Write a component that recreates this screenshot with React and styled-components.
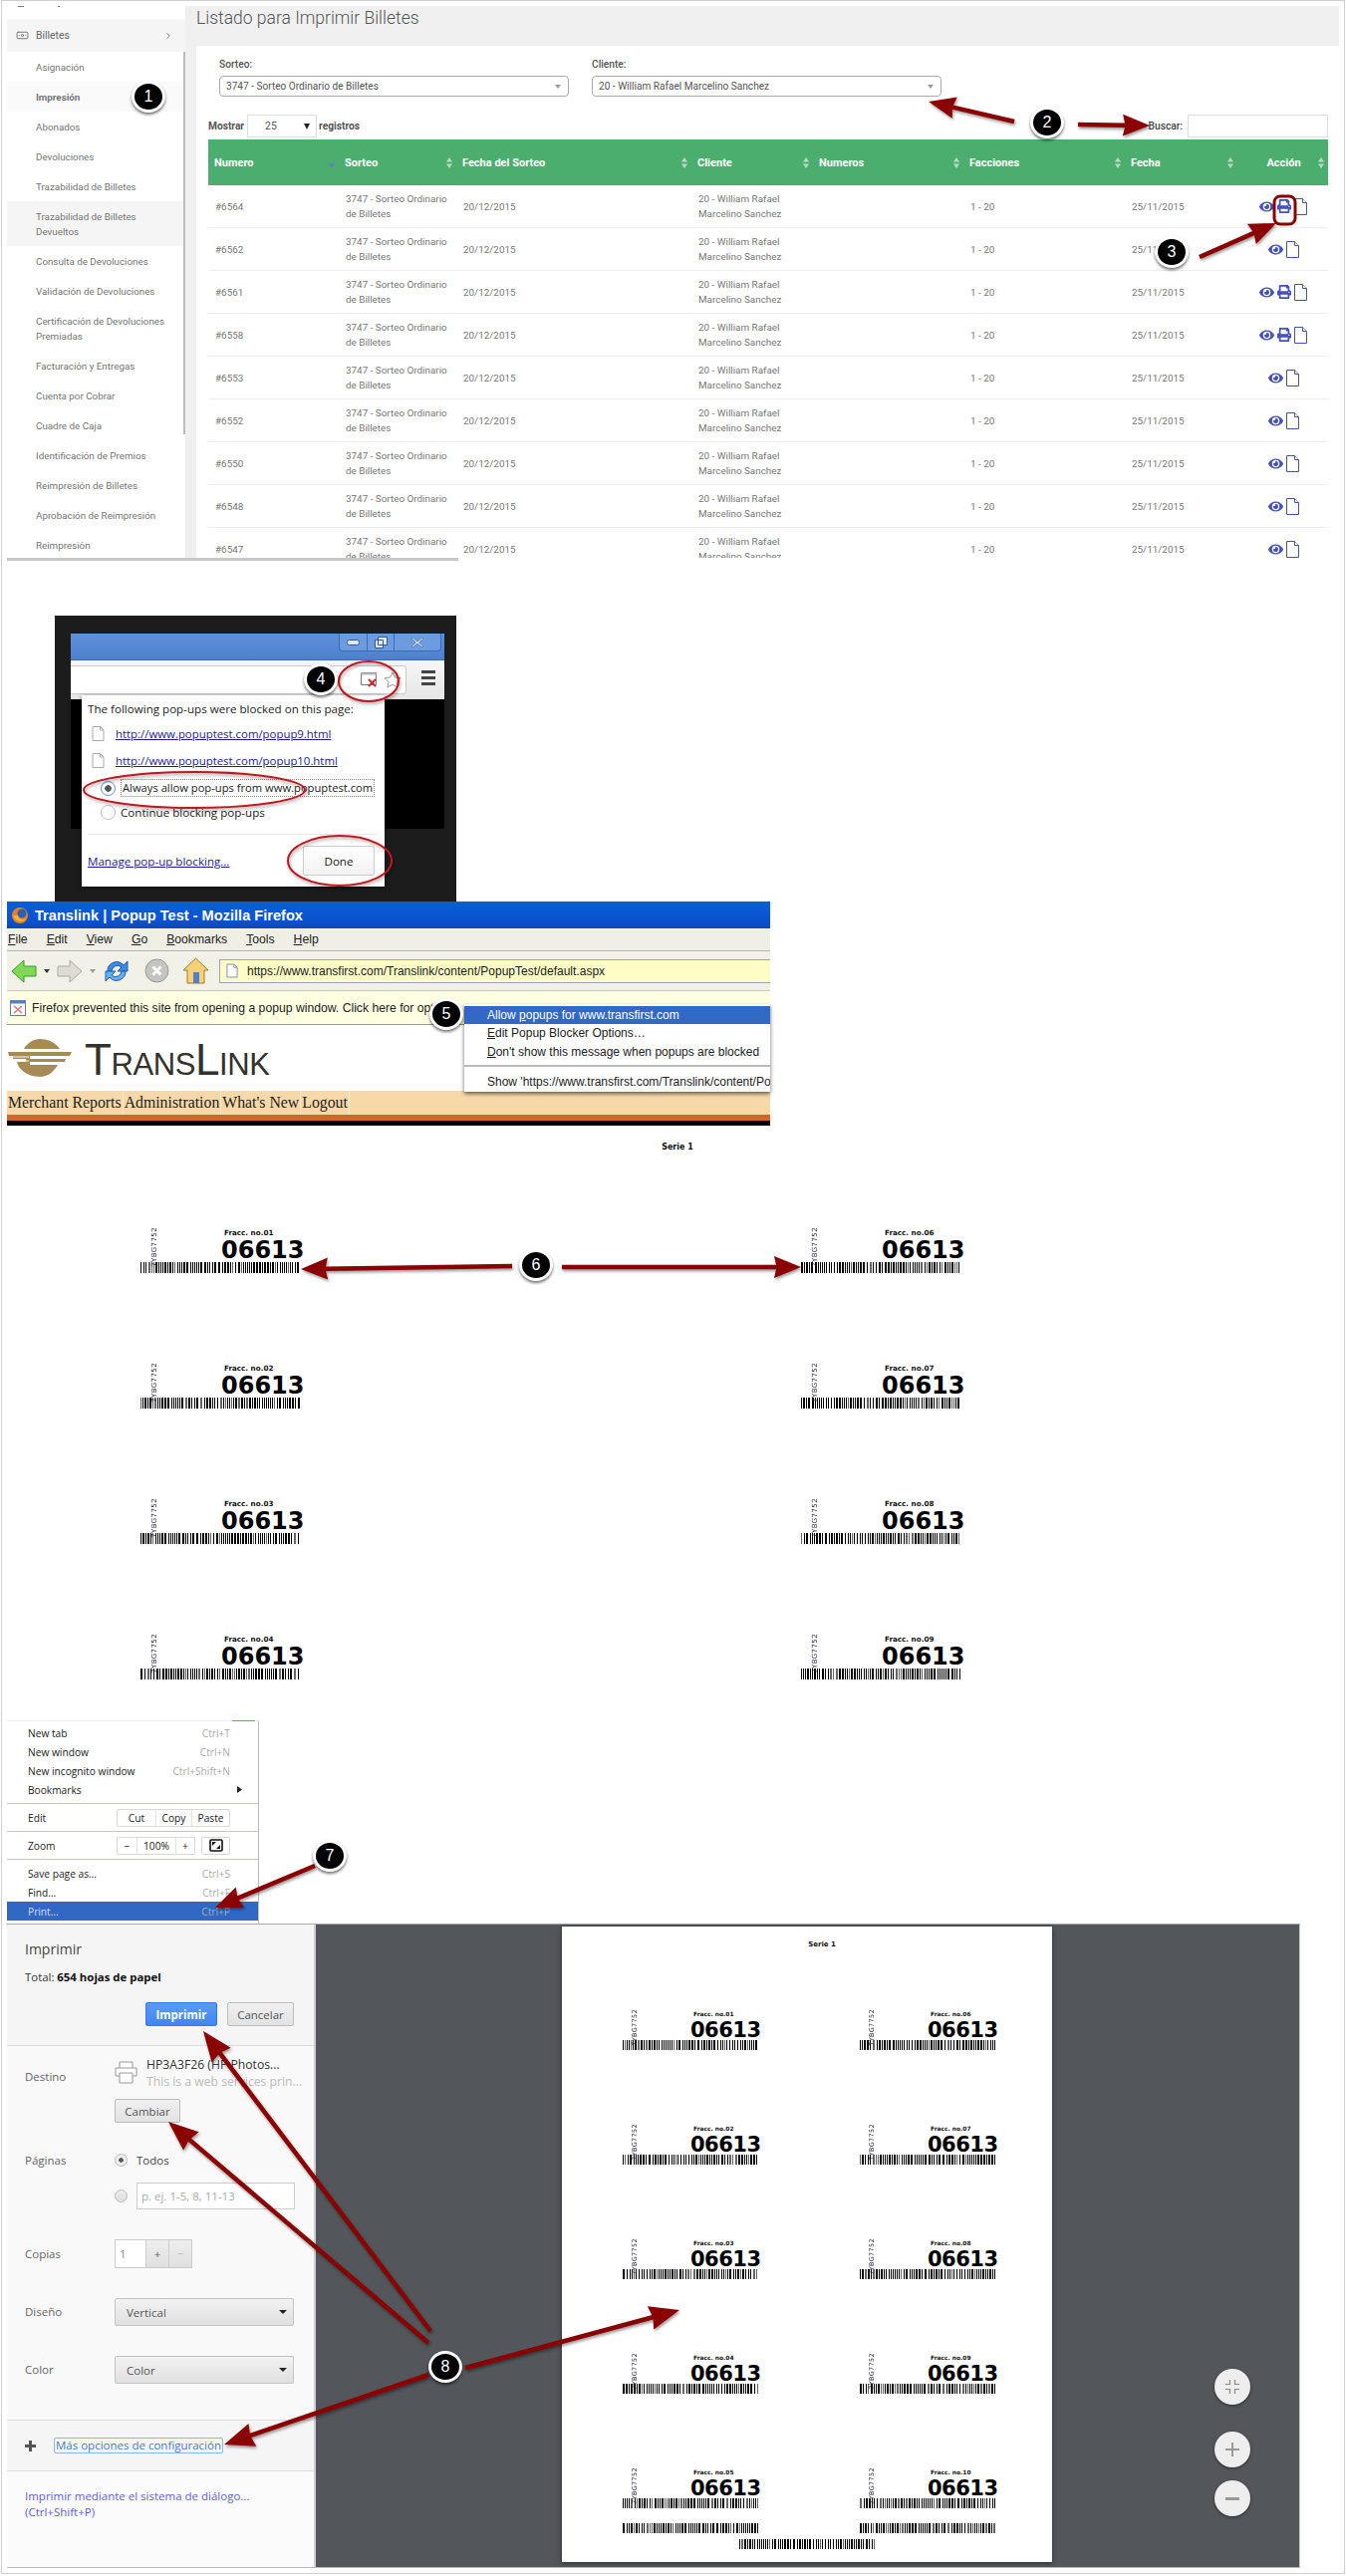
import React from "react";
import styled, { createGlobalStyle } from "styled-components";
import { FaEye, FaPrint } from "react-icons/fa";
import { Banknote, ChevronRight } from "lucide-react";

const Global = createGlobalStyle`
  html, body { margin: 0; padding: 0; background: #fff; }
  * { box-sizing: border-box; }
`;

/* ---------- page frame ---------- */
const Page = styled.div`
  position: relative;
  width: 1351px;
  height: 2586px;
  overflow: hidden;
  background: #fff;
`;
const Frame = styled.div`
  margin-left: 1px;
  width: 1349px;
  height: 2584px;
  padding: 5px 0 0 5px;
  border: 1px solid #cfcfcf;
  display: flex;
  flex-direction: column;
  align-items: flex-start;
`;

/* ---------- section A : ticket listing ---------- */
const Admin = styled.section`
  width: 1337px;
  height: 554px;
  display: flex;
  overflow: hidden;
  font-family: Roboto, "Liberation Sans", sans-serif;
`;
const Sidebar = styled.nav`
  position: relative;
  width: 179px;
  flex: none;
  background: #fff;
  &::after {
    content: "";
    position: absolute;
    top: 46px;
    bottom: 124px;
    right: 0;
    width: 2px;
    background: #bdbdbd;
  }
`;
const SideStub = styled.div`
  height: 13px;
  display: flex;
  gap: 34px;
  padding-left: 11px;
  & > i { display: block; height: 1px; width: 6px; background: #777; }
  & > i + i { width: 2px; }
`;
const SideHead = styled.div`
  height: 33px;
  background: #f5f5f5;
  display: flex;
  align-items: center;
  padding: 0 12px 0 9px;
  gap: 7px;
  font-size: 10.4px;
  color: #666;
  & > span { flex: 1; }
`;
const SideItem = styled.div`
  padding: 7.5px 10px 7.5px 29px;
  line-height: 15px;
  font-size: 9.8px;
  color: #757575;
  width: 177px;
  font-weight: ${p => (p.$bold ? 700 : 400)};
  background: ${p => (p.$bg ? p.$bg : "transparent")};
`;
const Main = styled.div`
  width: 1158px;
  flex: none;
  background: #f0f0f0;
  padding-left: 11px;
`;
const TitleBar = styled.h1`
  margin: 0;
  height: 40px;
  font-size: 17.5px;
  font-weight: 300;
  color: #555;
  line-height: 24px;
`;
const Card = styled.div`
  background: #fff;
  height: 520px;
  padding: 12px 11px 0 12px;
`;
const Filters = styled.div`
  display: grid;
  grid-template-columns: 351px 351px;
  gap: 23px;
  margin-left: 11px;
`;
const FieldLabel = styled.label`
  display: block;
  line-height: 14px;
  font-size: 10.2px;
  font-weight: 500;
  color: #555;
`;
const SelectBox = styled.div`
  margin-top: 4px;
  height: 21px;
  border: 1px solid #aaa;
  border-radius: 4px;
  padding: 0 6px;
  font-size: 10.1px;
  line-height: 19px;
  color: #555;
  display: flex;
  justify-content: space-between;
  align-items: center;
  &::after {
    content: "";
    border: 3px solid transparent;
    border-top: 4px solid #999;
    border-bottom: 0;
    margin-right: 1px;
  }
`;
const Controls = styled.div`
  margin-top: 18px;
  height: 23px;
  display: flex;
  align-items: center;
  font-size: 10.2px;
  font-weight: 700;
  color: #555;
`;
const LengthBox = styled.div`
  width: 70px;
  height: 23px;
  margin: 0 2px 0 3px;
  border: 1px solid #ddd;
  padding: 0 6px 0 17px;
  display: flex;
  align-items: center;
  justify-content: space-between;
  font-weight: 400;
  font-size: 10.4px;
  &::after {
    content: "";
    border: 3.5px solid transparent;
    border-top: 6px solid #222;
    border-bottom: 0;
  }
`;
const SearchLabel = styled.span`
  margin-left: auto;
  margin-right: 5px;
  font-weight: 500;
  color: #444;
`;
const SearchBox = styled.div`
  width: 141px;
  height: 23px;
  border: 1px solid #ddd;
`;
const Table = styled.table`
  margin-top: 2px;
  width: 1124px;
  table-layout: fixed;
  border-collapse: separate;
  border-spacing: 0;
`;
const HeadCell = styled.th`
  height: 46px;
  background: #4cae6e;
  color: #fff;
  font-size: 11px;
  font-weight: 700;
  text-align: ${p => (p.$center ? "center" : "left")};
  padding: 0 4px 0 6px;
  position: relative;
`;
const SortMark = styled.svg`
  position: absolute;
  right: 4px;
  top: 18px;
`;
const Cell = styled.td`
  height: 43px;
  padding: 0 6px 0 7px;
  border-bottom: 1px solid #eee;
  font-size: 9.9px;
  line-height: 15px;
  color: #777;
`;
const ActionWrap = styled.div`
  display: flex;
  align-items: center;
  justify-content: center;
  gap: 3px;
  color: #4352b8;
`;
const BottomScroll = styled.div`
  width: 453px;
  height: 3px;
  flex: none;
  background: #c8c8c8;
`;

/* ---------- section B : chrome pop-up dialog ---------- */
const DarkFrame = styled.section`
  margin: 55px 0 0 48px;
  width: 403px;
  height: 287px;
  flex: none;
  background: #1c1c1c;
  padding: 18px 12px 5px 16px;
`;
const ChromeWin = styled.div`
  position: relative;
  height: 264px;
  font-family: "Open Sans", "Noto Sans", sans-serif;
  font-size: 11.6px;
  color: #222;
`;
const ChromeTitle = styled.div`
  height: 27px;
  background: linear-gradient(#5e90da, #4f80cf);
  display: flex;
  justify-content: flex-end;
  padding-right: 3px;
  border-bottom: 1px solid #3c6cb4;
`;
const WinButtons = styled.div`
  display: flex;
  height: 18px;
  border: 1px solid #3c6cb4;
  border-top: 0;
  border-radius: 0 0 4px 4px;
  background: #6d9be0;
`;
const WinBtn = styled.div`
  width: ${p => p.$w}px;
  border-left: 1px solid #3c6cb4;
  display: flex;
  align-items: center;
  justify-content: center;
  &:first-child { border-left: 0; }
`;
const ChromeBar = styled.div`
  height: 39px;
  background: linear-gradient(#f6f6f6, #e6e6e6);
  padding: 5px 0 0 0;
  display: flex;
  align-items: flex-start;
`;
const Omnibox = styled.div`
  width: 337px;
  height: 29px;
  background: #fff;
  border: 1px solid #ccc;
  border-left: 0;
  border-radius: 0 3px 3px 0;
  display: flex;
  align-items: center;
  justify-content: flex-end;
  gap: 5px;
  padding-right: 4px;
`;
const Burger = styled.div`
  margin: 5px 0 0 15px;
  width: 14px;
  height: 15px;
  background: repeating-linear-gradient(#444 0 3px, transparent 3px 6px);
`;
const BlackPane = styled.div`
  height: 130px;
  background: #000;
`;
const Blocker = styled.div`
  position: absolute;
  left: 11px;
  top: 62px;
  width: 304px;
  height: 192px;
  background: #fff;
  box-shadow: 0 1px 4px rgba(0, 0, 0, 0.55);
  padding: 6px 7px 0 6px;
`;
const BlockerText = styled.div`
  line-height: 16px;
`;
const PopLink = styled.div`
  display: flex;
  align-items: center;
  gap: 11px;
  height: 27px;
  padding-left: 4px;
  margin-top: ${p => p.$mt || 0}px;
  color: #1a1a9a;
  text-decoration: underline;
  font-size: 11.4px;
`;
const RadioLine = styled.div`
  display: flex;
  align-items: center;
  height: 18px;
  padding-left: 13px;
  gap: 5px;
  margin-top: ${p => p.$mt || 0}px;
`;
const RadioDot = styled.span`
  width: 15px;
  height: 15px;
  flex: none;
  border-radius: 50%;
  border: 1px solid ${p => (p.$on ? "#5b8fe0" : "#bbb")};
  background: ${p => (p.$on ? "radial-gradient(circle, #555 0 3px, #fff 3.5px)" : "#fff")};
`;
const Dotted = styled.span`
  border: 1px dotted #888;
  line-height: 16px;
  padding: 0 1px;
  white-space: nowrap;
  font-size: 11.2px;
`;
const BlockerFoot = styled.div`
  margin-top: 13px;
  border-top: 1px solid #e6e6e6;
  padding-top: 11px;
  display: flex;
  align-items: center;
  justify-content: space-between;
  padding-right: 3px;
`;
const ManageLink = styled.span`
  color: #1a1a9a;
  text-decoration: underline;
`;
const DoneBtn = styled.div`
  width: 72px;
  height: 30px;
  border: 1px solid #ccc;
  border-radius: 2px;
  background: linear-gradient(#fff, #f2f2f2);
  display: flex;
  align-items: center;
  justify-content: center;
`;

/* ---------- section C : firefox ---------- */
const Firefox = styled.section`
  position: relative;
  width: 766px;
  height: 225px;
  flex: none;
  font-family: "Liberation Sans", Arial, sans-serif;
  background: #000;
`;
const FoxTitle = styled.div`
  height: 27px;
  background: linear-gradient(#0a5ed8, #0a52d0 70%, #0b49b8);
  color: #fff;
  font-size: 14.6px;
  font-weight: 700;
  display: flex;
  align-items: center;
  gap: 5px;
  padding-left: 3px;
`;
const FoxMenu = styled.div`
  height: 23px;
  background: #f0efe6;
  border-bottom: 1px solid #b8b7ac;
  display: flex;
  align-items: center;
  gap: 19px;
  padding-left: 1px;
  font-size: 12.2px;
  color: #222;
`;
const FoxTools = styled.div`
  height: 40px;
  background: #f2f1e8;
  border-bottom: 1px solid #c9c8bc;
  display: flex;
  align-items: center;
  padding-left: 4px;
  gap: 7px;
`;
const UrlBar = styled.div`
  margin-left: 3px;
  flex: 1;
  height: 24px;
  background: #fdfdc6;
  border: 1px solid #9da4b5;
  border-right: 0;
  display: flex;
  align-items: center;
  gap: 9px;
  padding-left: 6px;
  font-size: 12px;
  color: #222;
`;
const InfoBar = styled.div`
  height: 34px;
  background: #ffffe1;
  border-bottom: 1px solid #999;
  display: flex;
  align-items: center;
  gap: 6px;
  padding-left: 3px;
  font-size: 12.2px;
  color: #222;
  white-space: nowrap;
`;
const LogoBand = styled.div`
  height: 66px;
  background: #fff;
  display: flex;
  align-items: center;
  gap: 13px;
  padding-left: 1px;
`;
const LogoText = styled.div`
  font-size: 44px;
  font-variant: small-caps;
  letter-spacing: -0.4px;
  line-height: 1;
  color: #33322c;
  margin-top: 4px;
`;
const FoxNav = styled.div`
  height: 24px;
  background: #f7d9a9;
  display: flex;
  align-items: center;
  font-family: "Liberation Serif", serif;
  font-size: 15.8px;
  color: #222;
  & > span { padding: 0 1px; border-right: 1px solid #fbe9cc; line-height: 24px; white-space: nowrap; }
`;
const OrangeRule = styled.div`
  height: 6px;
  background: #d0682a;
`;
const FoxPopup = styled.div`
  position: absolute;
  left: 459px;
  top: 103px;
  width: 307px;
  height: 88px;
  background: #fff;
  padding: 2px 0 0 0;
  box-shadow: 0 2px 4px rgba(0, 0, 0, 0.6);
  font-size: 12px;
  color: #222;
  white-space: nowrap;
  overflow: hidden;
`;
const FoxItem = styled.div`
  height: ${p => p.$h || 18}px;
  line-height: ${p => p.$h || 18}px;
  padding-left: 23px;
  background: ${p => (p.$active ? "#3169c4" : "transparent")};
  color: ${p => (p.$active ? "#fff" : "#222")};
`;
const FoxDivider = styled.div`
  margin: 4px 0 5px;
  border-top: 2px solid #bbb;
`;

/* ---------- tickets ---------- */
const Sheet = styled.section`
  width: 1337px;
  height: 597px;
  flex: none;
  overflow: hidden;
`;
const SerieTitle = styled.div`
  font-family: "DejaVu Sans", sans-serif;
  font-weight: 700;
  font-size: ${p => p.$size}px;
  color: #111;
  text-align: center;
  padding-left: ${p => p.$pad || 0}px;
  line-height: 12px;
  padding-top: ${p => p.$top}px;
`;
const TicketGrid = styled.div`
  display: grid;
  grid-template-columns: ${p => p.$col}px 1fr;
  grid-auto-rows: ${p => p.$row}px;
  padding-left: ${p => p.$left}px;
  margin-top: ${p => p.$mt}px;
`;
const Ticket = styled.div`
  display: flex;
  flex-direction: column;
  align-items: flex-start;
`;
const TicketHead = styled.div`
  height: ${p => p.$h}px;
  display: flex;
  align-items: flex-start;
  font-family: "DejaVu Sans", sans-serif;
  font-weight: 700;
  color: #000;
`;
const SideCode = styled.div`
  writing-mode: vertical-rl;
  transform: rotate(180deg);
  font-size: ${p => p.$size}px;
  font-weight: 400;
  line-height: 6px;
  width: 6px;
  margin-left: ${p => p.$ml}px;
  color: #224;
  white-space: nowrap;
  letter-spacing: 0.4px;
`;
const TicketInfo = styled.div`
  margin-left: ${p => p.$ml}px;
  display: flex;
  flex-direction: column;
`;
const Fracc = styled.div`
  margin-left: ${p => p.$ml}px;
  font-size: ${p => p.$size}px;
  line-height: ${p => p.$lh}px;
  color: #111;
  white-space: nowrap;
`;
const Serial = styled.div`
  font-size: ${p => p.$size}px;
  line-height: ${p => p.$lh}px;
  letter-spacing: ${p => p.$ls}px;
`;

/* ---------- chrome menu ---------- */
const Menu = styled.section`
  width: 253px;
  height: 204px;
  flex: none;
  position: relative;
  border-top: 1px solid #eee;
  border-right: 1px solid #bbb;
  padding-top: 2px;
  font-family: "Open Sans", "Noto Sans", sans-serif;
  font-size: 10.2px;
  color: #222;
  background: #fff;
  &::before {
    content: "";
    position: absolute;
    left: 226px;
    top: -1px;
    width: 23px;
    height: 1px;
    background: #d66;
  }
`;
const MenuRow = styled.div`
  height: 19px;
  display: flex;
  align-items: center;
  justify-content: space-between;
  padding: 0 28px 0 21px;
  background: ${p => (p.$active ? "#3068c4" : "transparent")};
  color: ${p => (p.$active ? "#d8dee8" : "inherit")};
`;
const Shortcut = styled.span`
  color: #aaa;
`;
const MenuTool = styled.div`
  height: 28px;
  border-top: 1px solid #c8c8c0;
  display: flex;
  align-items: center;
  justify-content: space-between;
  padding: 0 28px 0 21px;
  margin-top: ${p => p.$mt || 0}px;
`;
const ToolGroup = styled.div`
  display: flex;
  gap: 6px;
`;
const Segments = styled.div`
  display: flex;
  height: 18px;
  border: 1px solid #d8d8d8;
  border-radius: 2px;
`;
const Segment = styled.div`
  width: ${p => p.$w}px;
  display: flex;
  align-items: center;
  justify-content: center;
  border-left: 1px solid #e2e2e2;
  &:first-child { border-left: 0; }
`;
const MenuFoot = styled.div`
  border-top: 1px solid #c8c8c0;
  padding-top: 4px;
`;

/* ---------- print dialog ---------- */
const PrintDialog = styled.section`
  width: 1298px;
  height: 647px;
  flex: none;
  display: flex;
  border-top: 1px solid #aaa;
  border-bottom: 1px solid #bbb;
  font-family: "Open Sans", "Noto Sans", sans-serif;
  font-size: 11.5px;
  color: #555;
`;
const Panel = styled.aside`
  width: 310px;
  flex: none;
  display: flex;
  flex-direction: column;
  background: #fbfbfb;
  border-right: 2px solid #d0d0d0;
`;
const PanelHead = styled.div`
  height: 122px;
  flex: none;
  background: #f5f5f5;
  border-bottom: 1px solid #dcdcdc;
  padding: 16px 20px 0 18px;
`;
const PanelTitle = styled.div`
  font-size: 14px;
  line-height: 18px;
  color: #444;
`;
const PanelTotal = styled.div`
  margin-top: 11px;
  line-height: 16px;
  font-size: 11.4px;
  color: #333;
  & > b { color: #111; }
`;
const PanelActions = styled.div`
  margin-top: 17px;
  display: flex;
  justify-content: flex-end;
  gap: 10px;
`;
const PrintBtn = styled.div`
  width: ${p => p.$w}px;
  height: ${p => p.$h || 24}px;
  border: 1px solid ${p => (p.$primary ? "#3079ed" : "#bbb")};
  border-radius: 2px;
  display: flex;
  align-items: center;
  justify-content: center;
  font-weight: ${p => (p.$primary ? 700 : 400)};
  color: ${p => (p.$primary ? "#fff" : "#555")};
  background: ${p => (p.$primary ? "linear-gradient(#5b9bf5, #4285f4)" : "linear-gradient(#f0f0f0, #e2e2e2)")};
  margin-top: ${p => p.$mt || 0}px;
`;
const Settings = styled.div`
  height: 375px;
  flex: none;
  padding: 10px 20px 0 18px;
  background: #f9f9f9;
`;
const SettingRow = styled.div`
  display: grid;
  grid-template-columns: 90px 1fr;
  margin-top: ${p => p.$mt || 0}px;
`;
const SetLabel = styled.div`
  line-height: 16px;
  padding-top: ${p => p.$pt || 0}px;
  color: #666;
`;
const DestWrap = styled.div`
  display: flex;
  gap: 9px;
`;
const DestName = styled.div`
  line-height: 17px;
  white-space: nowrap;
  color: #333;
  font-size: 12.2px;
  & > small { display: block; font-size: 12.2px; color: #bbb; }
`;
const RadioRow = styled.div`
  display: flex;
  align-items: center;
  gap: 9px;
  margin-top: ${p => p.$mt || 0}px;
  color: #444;
`;
const PrintRadio = styled.span`
  width: 13px;
  height: 13px;
  flex: none;
  border-radius: 50%;
  border: 1px solid #bbb;
  background: ${p => (p.$on ? "radial-gradient(circle, #555 0 2px, #eee 2.5px)" : "linear-gradient(#eee, #ddd)")};
`;
const TextField = styled.div`
  width: ${p => p.$w}px;
  height: 27px;
  background: #fff;
  border: 1px solid #ccc;
  padding-left: 4px;
  display: flex;
  align-items: center;
  color: #aaa;
`;
const Stepper = styled.div`
  display: flex;
  height: 29px;
`;
const StepInput = styled.div`
  width: 32px;
  background: #fff;
  border: 1px solid #ccc;
  padding-left: 4px;
  display: flex;
  align-items: center;
  color: #888;
`;
const StepBtn = styled.div`
  width: 23px;
  border: 1px solid #ccc;
  border-left: 0;
  background: linear-gradient(#eee, #e0e0e0);
  display: flex;
  align-items: center;
  justify-content: center;
  color: ${p => (p.$off ? "#bbb" : "#555")};
`;
const Dropdown = styled.div`
  height: 28px;
  width: 180px;
  border: 1px solid #c4c4c4;
  border-radius: 2px;
  background: linear-gradient(#f2f2f2, #e0e0e0);
  padding: 0 6px 0 11px;
  display: flex;
  align-items: center;
  justify-content: space-between;
  color: #555;
  &::after {
    content: "";
    border: 4px solid transparent;
    border-top: 4px solid #222;
    border-bottom: 0;
  }
`;
const MoreRow = styled.div`
  height: 52px;
  flex: none;
  display: flex;
  align-items: center;
  background: #f5f5f5;
  border-top: 1px solid #e0e0e0;
  border-bottom: 1px solid #e0e0e0;
  padding-left: 18px;
`;
const PlusMark = styled.span`
  width: 11px;
  height: 11px;
  margin-right: 18px;
  background:
    linear-gradient(#555, #555) center / 100% 3px no-repeat,
    linear-gradient(#555, #555) center / 3px 100% no-repeat;
`;
const MoreLink = styled.span`
  color: #4a7bd0;
  border: 1px solid #8fb4ee;
  border-radius: 2px;
  line-height: 14px;
  padding: 0 1px;
  white-space: nowrap;
`;
const SysLink = styled.div`
  padding: 17px 0 0 18px;
  color: #5f62d6;
  line-height: 16px;
`;
const Viewer = styled.div`
  flex: 1;
  position: relative;
  background: #53565a;
  border-right: 1px solid #ccc;
  padding: 2px 0 0 247px;
`;
const PreviewPage = styled.div`
  width: 492px;
  height: 638px;
  background: #fff;
  box-shadow: 0 1px 4px rgba(0, 0, 0, 0.5);
`;
const ExtraBars = styled.div`
  display: grid;
  grid-template-columns: 238px 1fr;
  padding-left: 61px;
  margin-top: -59px;
`;
const CenterBar = styled.div`
  margin: 6px 0 0 178px;
`;
const ZoomBtn = styled.div`
  position: absolute;
  right: ${p => p.$right}px;
  top: ${p => p.$top}px;
  width: 36px;
  height: 36px;
  border-radius: 50%;
  background: #eee;
  box-shadow: 0 1px 3px rgba(0, 0, 0, 0.5);
  display: flex;
  align-items: center;
  justify-content: center;
`;

/* ---------- annotation overlay ---------- */
const Overlay = styled.svg`
  position: absolute;
  left: 0;
  top: 0;
  pointer-events: none;
`;
const Badge = styled.div`
  position: absolute;
  left: ${p => p.$x - 17}px;
  top: ${p => p.$y - 16}px;
  width: 34px;
  height: 32px;
  border-radius: 50%;
  background: #000;
  border: 3px solid #fff;
  box-shadow: 0 2px 3px rgba(0, 0, 0, 0.55);
  color: #fff;
  font-family: "Liberation Sans", Arial, sans-serif;
  font-size: 16px;
  display: flex;
  align-items: center;
  justify-content: center;
`;

/* ---------- drawings ---------- */
function Arrow({ from, to, len = 25, half = 11, shaft = 4.5 }) {
  const dx = to[0] - from[0];
  const dy = to[1] - from[1];
  const d = Math.hypot(dx, dy);
  const ux = dx / d;
  const uy = dy / d;
  const nx = -uy;
  const ny = ux;
  const bx = to[0] - ux * len;
  const by = to[1] - uy * len;
  const pts = [
    [from[0] + (nx * shaft) / 2, from[1] + (ny * shaft) / 2],
    [bx + (nx * shaft) / 2, by + (ny * shaft) / 2],
    [bx + nx * half - ux * 2, by + ny * half - uy * 2],
    to,
    [bx - nx * half - ux * 2, by - ny * half - uy * 2],
    [bx - (nx * shaft) / 2, by - (ny * shaft) / 2],
    [from[0] - (nx * shaft) / 2, from[1] - (ny * shaft) / 2],
  ];
  return <polygon points={pts.map(p => p.join(",")).join(" ")} fill="#8b0000" style={{ filter: "drop-shadow(1px 2px 1.5px rgba(0,0,0,.4))" }} />;
}

function Barcode({ width, height, seed = 7 }) {
  const bars = [];
  let x = 0;
  let s = seed;
  const next = () => {
    s = (s * 137 + 11) % 251;
    return s;
  };
  while (x < width) {
    const r = next();
    const w = r % 3 === 0 ? 2 : 1;
    bars.push(<rect key={x} x={x} y={0} width={w} height={height} fill={r % 7 === 0 ? "#666" : "#000"} />);
    x += w + (r % 5 === 0 ? 2 : 1);
  }
  return (
    <svg width={width} height={height} shapeRendering="crispEdges" style={{ display: "block" }}>
      {bars}
    </svg>
  );
}

function SortIcon({ active }) {
  return (
    <SortMark width="6" height="11" viewBox="0 0 6 11">
      <path d="M3 0 6 4.5H0Z" fill={active ? "transparent" : "#b9d9c4"} />
      <path d="M3 11 0 6.5H6Z" fill={active ? "#6a78c8" : "#b9d9c4"} />
    </SortMark>
  );
}

function DocIcon() {
  return (
    <svg width="13" height="17" viewBox="0 0 13 17" fill="#fff" stroke="currentColor" strokeWidth="1">
      <path d="M.5.5H8.5L12.5 4.5V16.5H.5Z" />
      <path d="M8.5.5V4.5H12.5" />
    </svg>
  );
}

const sizes = {
  big: { head: 35, code: 7, codeMl: 11, infoMl: 64, fracc: 7.2, fraccMl: 3, fraccLh: 12, num: 24, numLh: 22, ls: 0, bar: 160, barH: 11 },
  small: { head: 31, code: 6.4, codeMl: 9, infoMl: 53, fracc: 5.9, fraccMl: 3, fraccLh: 11, num: 21, numLh: 20, ls: -0.5, bar: 136, barH: 10 },
};

function TicketBlock({ no, kind, seed }) {
  const c = sizes[kind];
  return (
    <Ticket>
      <TicketHead $h={c.head}>
        <SideCode $size={c.code} $ml={c.codeMl}>7YBG7752</SideCode>
        <TicketInfo $ml={c.infoMl}>
          <Fracc $size={c.fracc} $lh={c.fraccLh} $ml={c.fraccMl}>Fracc. no.{no}</Fracc>
          <Serial $size={c.num} $lh={c.numLh} $ls={c.ls}>06613</Serial>
        </TicketInfo>
      </TicketHead>
      <Barcode width={c.bar} height={c.barH} seed={seed} />
    </Ticket>
  );
}

const ticketOrder = [["01", "06"], ["02", "07"], ["03", "08"], ["04", "09"], ["05", "10"]];

function PageIcon({ w = 13, h = 15, stroke = "#aaa" }) {
  return (
    <svg width={w} height={h} viewBox="0 0 13 15">
      <path d="M1 .5H8.5L12 4V14.5H1Z M8.5 .5V4H12" fill="#fff" stroke={stroke} />
    </svg>
  );
}

const menu = ["Asignación", "Impresión", "Abonados", "Devoluciones", "Trazabilidad de Billetes", "Trazabilidad de Billetes Devueltos", "Consulta de Devoluciones", "Validación de Devoluciones", "Certificación de Devoluciones Premiadas", "Facturación y Entregas", "Cuenta por Cobrar", "Cuadre de Caja", "Identificación de Premios", "Reimpresión de Billetes", "Aprobación de Reimpresión", "Reimpresión"];
const columns = [["Numero", 131], ["Sorteo", 118], ["Fecha del Sorteo", 236], ["Cliente", 122], ["Numeros", 151], ["Facciones", 162], ["Fecha", 113], ["Acción", 91]];
const rows = [["6564", 1], ["6562", 0], ["6561", 1], ["6558", 1], ["6553", 0], ["6552", 0], ["6550", 0], ["6548", 0], ["6547", 0]];

const badges = [[1, 149, 97], [2, 1051, 123], [3, 1176, 253], [4, 322, 682], [5, 448, 1018], [6, 538, 1270], [7, 331, 1863], [8, 447, 2376]];

export default function App() {
  return (
    <Page>
      <Global />
      <Frame>
        <Admin>
          <Sidebar>
            <SideStub><i /><i /></SideStub>
            <SideHead>
              <Banknote size={13} strokeWidth={1.6} />
              <span>Billetes</span>
              <ChevronRight size={10} />
            </SideHead>
            {menu.map((m, i) => (
              <SideItem key={m + i} $bold={i === 1} $bg={i === 1 ? "#fafafa" : i === 5 ? "#f5f5f6" : undefined}>{m}</SideItem>
            ))}
          </Sidebar>
          <Main>
            <TitleBar>Listado para Imprimir Billetes</TitleBar>
            <Card>
              <Filters>
                <div>
                  <FieldLabel>Sorteo:</FieldLabel>
                  <SelectBox>3747 - Sorteo Ordinario de Billetes</SelectBox>
                </div>
                <div>
                  <FieldLabel>Cliente:</FieldLabel>
                  <SelectBox>20 - William Rafael Marcelino Sanchez</SelectBox>
                </div>
              </Filters>
              <Controls>
                Mostrar
                <LengthBox>25</LengthBox>
                registros
                <SearchLabel>Buscar:</SearchLabel>
                <SearchBox />
              </Controls>
              <Table>
                <colgroup>
                  {columns.map(([n, w]) => <col key={n} width={w} />)}
                </colgroup>
                <thead>
                  <tr>
                    {columns.map(([n], i) => (
                      <HeadCell key={n} $center={i === 7}>
                        {n}
                        <SortIcon active={i === 0} />
                      </HeadCell>
                    ))}
                  </tr>
                </thead>
                <tbody>
                  {rows.map(([id, printable]) => (
                    <tr key={id}>
                      <Cell>#{id}</Cell>
                      <Cell>3747 - Sorteo Ordinario de Billetes</Cell>
                      <Cell>20/12/2015</Cell>
                      <Cell>20 - William Rafael Marcelino Sanchez</Cell>
                      <Cell />
                      <Cell>1 - 20</Cell>
                      <Cell>25/11/2015</Cell>
                      <Cell>
                        <ActionWrap>
                          <FaEye size={15} />
                          {printable ? <FaPrint size={14} /> : null}
                          <DocIcon />
                        </ActionWrap>
                      </Cell>
                    </tr>
                  ))}
                </tbody>
              </Table>
            </Card>
          </Main>
        </Admin>
        <BottomScroll />

        <DarkFrame>
          <ChromeWin>
            <ChromeTitle>
              <WinButtons>
                <WinBtn $w={27}>
                  <svg width="13" height="6"><rect x=".5" y=".5" width="12" height="5" rx="2" fill="#dfe8f6" stroke="#33588f" /></svg>
                </WinBtn>
                <WinBtn $w={27}>
                  <svg width="14" height="14"><path d="M4.5 1.5h9v8h-9z M1.5 4.5h8v8h-8z" fill="#dfe8f6" stroke="#33588f" /></svg>
                </WinBtn>
                <WinBtn $w={47}>
                  <svg width="12" height="10"><path d="M1 0 6 4 11 0 12 1 7.5 5 12 9 11 10 6 6 1 10 0 9 4.5 5 0 1Z" fill="#e7eef9" stroke="#33588f" strokeWidth=".6" /></svg>
                </WinBtn>
              </WinButtons>
            </ChromeTitle>
            <ChromeBar>
              <Omnibox>
                <svg width="18" height="17" viewBox="0 0 18 17">
                  <path d="M.5 1.5h15v12H.5z" fill="#fff" stroke="#777" />
                  <path d="M.5 1.5h15v2H.5z" fill="#bbb" />
                  <path d="M8 8 15 15M15 8 8 15" stroke="#d22" strokeWidth="2" />
                </svg>
                <svg width="18" height="17" viewBox="0 0 18 17">
                  <path d="M9 1 11.4 6 17 6.7 13 10.5 14 16 9 13.3 4 16 5 10.5 1 6.7 6.6 6Z" fill="#fff" stroke="#999" />
                </svg>
              </Omnibox>
              <Burger />
            </ChromeBar>
            <BlackPane />
            <Blocker>
              <BlockerText>The following pop-ups were blocked on this page:</BlockerText>
              <PopLink $mt={3}><PageIcon />http://www.popuptest.com/popup9.html</PopLink>
              <PopLink><PageIcon />http://www.popuptest.com/popup10.html</PopLink>
              <RadioLine $mt={5}><RadioDot $on /><Dotted>Always allow pop-ups from www.popuptest.com</Dotted></RadioLine>
              <RadioLine $mt={6}><RadioDot /><span>Continue blocking pop-ups</span></RadioLine>
              <BlockerFoot>
                <ManageLink>Manage pop-up blocking…</ManageLink>
                <DoneBtn>Done</DoneBtn>
              </BlockerFoot>
            </Blocker>
          </ChromeWin>
        </DarkFrame>

        <Firefox>
          <FoxTitle>
            <svg width="20" height="18" viewBox="0 0 20 18">
              <circle cx="10" cy="9" r="8" fill="#e8811c" />
              <circle cx="12" cy="7" r="4.5" fill="#2d5fb4" />
              <path d="M3 9c2 6 9 8 14 3-4 2-8 1-9-3Z" fill="#f6b23a" />
            </svg>
            Translink | Popup Test - Mozilla Firefox
          </FoxTitle>
          <FoxMenu>
            {["File", "Edit", "View", "Go", "Bookmarks", "Tools", "Help"].map(m => (
              <span key={m}><u>{m[0]}</u>{m.slice(1)}</span>
            ))}
          </FoxMenu>
          <FoxTools>
            <svg width="26" height="24" viewBox="0 0 26 24"><path d="M1 12 13 1V7H25V17H13V23Z" fill="#7ed957" stroke="#3a9a2c" /></svg>
            <svg width="6" height="4" viewBox="0 0 6 4"><path d="M0 0H6L3 4Z" fill="#333" /></svg>
            <svg width="26" height="24" viewBox="0 0 26 24"><path d="M25 12 13 1V7H1V17H13V23Z" fill="#dedcd2" stroke="#aaa" /></svg>
            <svg width="6" height="4" viewBox="0 0 6 4"><path d="M0 0H6L3 4Z" fill="#999" /></svg>
            <svg width="28" height="26" viewBox="0 0 28 26">
              <path d="M5 13A9 9 0 0 1 21 7L25 3V13H15L19 9A6 6 0 0 0 9 13Z" fill="#3c8be0" stroke="#1c5fb0" />
              <path d="M23 13A9 9 0 0 1 7 19L3 23V13H13L9 17A6 6 0 0 0 19 13Z" fill="#62aef2" stroke="#1c5fb0" />
            </svg>
            <svg width="25" height="25" viewBox="0 0 25 25" style={{ marginLeft: 7 }}>
              <circle cx="12.5" cy="12.5" r="11.5" fill="#c4c4c0" stroke="#999" />
              <path d="M8.5 8.5 16.5 16.5M16.5 8.5 8.5 16.5" stroke="#fff" strokeWidth="3" />
            </svg>
            <svg width="27" height="27" viewBox="0 0 27 27" style={{ marginLeft: 6 }}>
              <path d="M13.5 1 26 13H22V26H5V13H1Z" fill="#f3d27a" stroke="#a8792a" />
              <rect x="11" y="15" width="6" height="11" fill="#5a7fc0" />
            </svg>
            <UrlBar>
              <PageIcon w={12} h={15} stroke="#7a8db0" />
              https://www.transfirst.com/Translink/content/PopupTest/default.aspx
            </UrlBar>
          </FoxTools>
          <InfoBar>
            <svg width="16" height="16" viewBox="0 0 16 16">
              <rect x=".5" y=".5" width="15" height="15" fill="#fff" stroke="#5a7fc0" />
              <rect x=".5" y=".5" width="15" height="3" fill="#5a7fc0" />
              <path d="M4 6 12 13M12 6 4 13" stroke="#d77" strokeWidth="1.5" />
            </svg>
            Firefox prevented this site from opening a popup window. Click here for options...
          </InfoBar>
          <LogoBand>
            <svg width="64" height="40" viewBox="0 0 64 40">
              <path d="M16 11C19 5 26 1 32 1 41 1 48 5 52 11Z" fill="#a88a55" />
              <path d="M0 14H64L62 18H22V21H58L57 24H22V27H50C46 34 40 39 32 39 18 39 10 30 9 24H18V21H5V18H1Z" fill="#a88a55" />
              <path d="M0 12H64M4 19H21M8 23H21M22 20H60" stroke="#fff" strokeWidth="1" />
            </svg>
            <LogoText>TransLink</LogoText>
          </LogoBand>
          <FoxNav>
            <span>Merchant Reports</span>
            <span>Administration</span>
            <span>What's New</span>
            <span>Logout</span>
          </FoxNav>
          <OrangeRule />
          <FoxPopup>
            <FoxItem $active>Allow <u>p</u>opups for www.transfirst.com</FoxItem>
            <FoxItem $h={19}><u>E</u>dit Popup Blocker Options…</FoxItem>
            <FoxItem $h={18}><u>D</u>on't show this message when popups are blocked</FoxItem>
            <FoxDivider />
            <FoxItem $h={20}>Show 'https://www.transfirst.com/Translink/content/PopupTest</FoxItem>
          </FoxPopup>
        </Firefox>

        <Sheet>
          <SerieTitle $size={8} $pad={9} $top={16}>Serie 1</SerieTitle>
          <TicketGrid $col={663} $row={136} $left={134} $mt={74}>
            {ticketOrder.slice(0, 4).flat().map(no => (
              <TicketBlock key={no} no={no} kind="big" seed={+no + 5} />
            ))}
          </TicketGrid>
        </Sheet>

        <Menu>
          <MenuRow>New tab<Shortcut>Ctrl+T</Shortcut></MenuRow>
          <MenuRow>New window<Shortcut>Ctrl+N</Shortcut></MenuRow>
          <MenuRow>New incognito window<Shortcut>Ctrl+Shift+N</Shortcut></MenuRow>
          <MenuRow>Bookmarks
            <svg width="5" height="7" viewBox="0 0 5 7" style={{ marginRight: -12 }}><path d="M0 0 5 3.5 0 7Z" fill="#222" /></svg>
          </MenuRow>
          <MenuTool $mt={4}>Edit
            <Segments>
              <Segment $w={38}>Cut</Segment>
              <Segment $w={36}>Copy</Segment>
              <Segment $w={38}>Paste</Segment>
            </Segments>
          </MenuTool>
          <MenuTool>Zoom
            <ToolGroup>
              <Segments>
                <Segment $w={19}>−</Segment>
                <Segment $w={39}>100%</Segment>
                <Segment $w={19}>+</Segment>
              </Segments>
              <Segments>
                <Segment $w={27}>
                  <svg width="14" height="13" viewBox="0 0 14 13">
                    <rect x="1" y="1" width="12" height="11" rx="1" fill="#fff" stroke="#111" strokeWidth="1.6" />
                    <path d="M3 3H7L3 7ZM11 10H7L11 6Z" fill="#111" />
                  </svg>
                </Segment>
              </Segments>
            </ToolGroup>
          </MenuTool>
          <MenuFoot>
            <MenuRow>Save page as…<Shortcut>Ctrl+S</Shortcut></MenuRow>
            <MenuRow>Find…<Shortcut>Ctrl+F</Shortcut></MenuRow>
            <MenuRow $active>Print…<Shortcut>Ctrl+P</Shortcut></MenuRow>
          </MenuFoot>
        </Menu>

        <PrintDialog>
          <Panel>
            <PanelHead>
              <PanelTitle>Imprimir</PanelTitle>
              <PanelTotal>Total: <b>654 hojas de papel</b></PanelTotal>
              <PanelActions>
                <PrintBtn $primary $w={72}>Imprimir</PrintBtn>
                <PrintBtn $w={67}>Cancelar</PrintBtn>
              </PanelActions>
            </PanelHead>
            <Settings>
              <SettingRow>
                <SetLabel $pt={13}>Destino</SetLabel>
                <div>
                  <DestWrap>
                    <svg width="23" height="23" viewBox="0 0 23 23" style={{ marginTop: 5 }}>
                      <path d="M5 7V1H18V7M5 15H1V7H22V15H18M5 12H18V22H5Z" fill="#fff" stroke="#999" />
                    </svg>
                    <DestName>
                      HP3A3F26 (HP Photos...
                      <small>This is a web services prin...</small>
                    </DestName>
                  </DestWrap>
                  <PrintBtn $w={66} $mt={9}>Cambiar</PrintBtn>
                </div>
              </SettingRow>
              <SettingRow $mt={30}>
                <SetLabel>Páginas</SetLabel>
                <div>
                  <RadioRow><PrintRadio $on />Todos</RadioRow>
                  <RadioRow $mt={15}><PrintRadio /><TextField $w={159}>p. ej. 1-5, 8, 11-13</TextField></RadioRow>
                </div>
              </SettingRow>
              <SettingRow $mt={30}>
                <SetLabel $pt={7}>Copias</SetLabel>
                <Stepper>
                  <StepInput>1</StepInput>
                  <StepBtn>+</StepBtn>
                  <StepBtn $off>−</StepBtn>
                </Stepper>
              </SettingRow>
              <SettingRow $mt={30}>
                <SetLabel $pt={6}>Diseño</SetLabel>
                <Dropdown>Vertical</Dropdown>
              </SettingRow>
              <SettingRow $mt={30}>
                <SetLabel $pt={6}>Color</SetLabel>
                <Dropdown>Color</Dropdown>
              </SettingRow>
            </Settings>
            <MoreRow>
              <PlusMark />
              <MoreLink>Más opciones de configuración</MoreLink>
            </MoreRow>
            <SysLink>
              Imprimir mediante el sistema de diálogo...
              <br />
              (Ctrl+Shift+P)
            </SysLink>
          </Panel>
          <Viewer>
            <PreviewPage>
              <SerieTitle $size={7} $pad={30} $top={12}>Serie 1</SerieTitle>
              <TicketGrid $col={238} $row={115} $left={61} $mt={59}>
                {ticketOrder.flat().map(no => (
                  <TicketBlock key={no} no={no} kind="small" seed={+no + 20} />
                ))}
              </TicketGrid>
              <ExtraBars>
                <Barcode width={136} height={10} seed={44} />
                <Barcode width={136} height={10} seed={49} />
              </ExtraBars>
              <CenterBar><Barcode width={136} height={10} seed={51} /></CenterBar>
            </PreviewPage>
            <ZoomBtn $right={49} $top={446}>
              <svg width="14" height="14" viewBox="0 0 14 14" fill="none" stroke="#888" strokeWidth="1.2">
                <path d="M4.5 0V4.5H0M9.5 0V4.5H14M4.5 14V9.5H0M9.5 14V9.5H14" />
              </svg>
            </ZoomBtn>
            <ZoomBtn $right={49} $top={509}>
              <svg width="14" height="14" viewBox="0 0 14 14"><path d="M6 0H8V6H14V8H8V14H6V8H0V6H6Z" fill="#999" /></svg>
            </ZoomBtn>
            <ZoomBtn $right={49} $top={558}>
              <svg width="14" height="3" viewBox="0 0 14 3"><rect width="14" height="3" fill="#999" /></svg>
            </ZoomBtn>
          </Viewer>
        </PrintDialog>
      </Frame>

      <Overlay width="1351" height="2586" viewBox="0 0 1351 2586">
        <Arrow from={[1018, 122]} to={[932, 102]} />
        <Arrow from={[1082, 125]} to={[1154, 126]} />
        <Arrow from={[1204, 258]} to={[1281, 224]} />
        <Arrow from={[514, 1271]} to={[302, 1274]} />
        <Arrow from={[564, 1272]} to={[804, 1272]} />
        <Arrow from={[316, 1873]} to={[216, 1915]} />
        <Arrow from={[432, 2340]} to={[204, 2039]} len={28} half={12} />
        <Arrow from={[430, 2352]} to={[169, 2130]} len={28} half={12} />
        <Arrow from={[430, 2384]} to={[225, 2454]} len={28} half={12} />
        <Arrow from={[467, 2377]} to={[682, 2319]} len={28} half={12} />
        <rect x="1279" y="197" width="21" height="28" rx="6" fill="none" stroke="#8b0000" strokeWidth="3" />
        <g fill="none" stroke="#c4161c" strokeWidth="2" style={{ filter: "drop-shadow(1px 2px 1.5px rgba(0,0,0,.35))" }}>
          <ellipse cx="370" cy="684" rx="30" ry="20" />
          <ellipse cx="195" cy="793" rx="111" ry="18" />
          <ellipse cx="341" cy="864" rx="52" ry="25" />
        </g>
      </Overlay>
      {badges.map(([n, x, y]) => <Badge key={n} $x={x} $y={y}>{n}</Badge>)}
    </Page>
  );
}
